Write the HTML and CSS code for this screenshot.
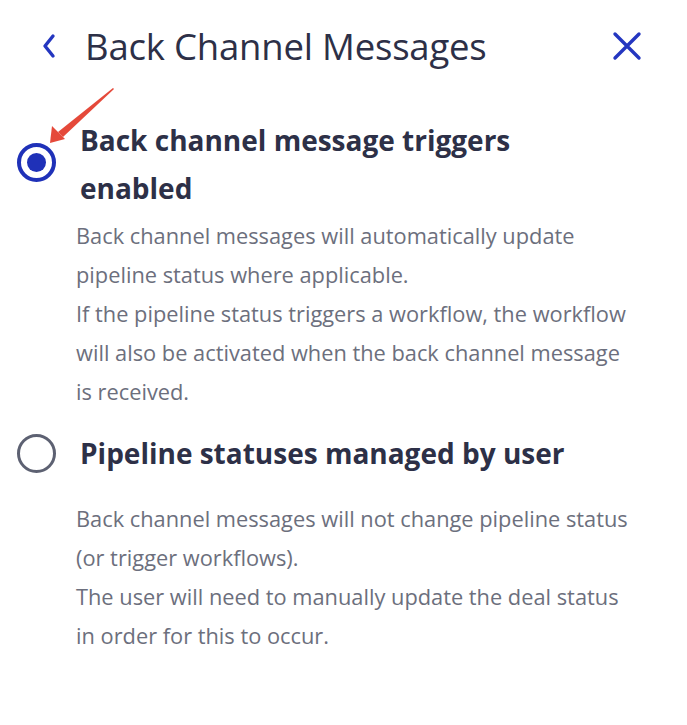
FILE: index.html
```html
<!DOCTYPE html>
<html>
<head>
<meta charset="utf-8">
<link rel="stylesheet" href="styles.css">
</head>
<body>
<div class="panel">
  <header class="header">
    <button class="icon-btn back" aria-label="Back">
      <svg width="14" height="26" viewBox="0 0 14 26"><path d="M11 3 L3 13 L11 23" fill="none" stroke="#2436c0" stroke-width="3.4" stroke-linecap="round" stroke-linejoin="round"/></svg>
    </button>
    <h1 class="title">Back Channel Messages</h1>
    <button class="icon-btn close" aria-label="Close">
      <svg width="30" height="30" viewBox="0 0 30 30"><path d="M3 3 L27 27 M27 3 L3 27" fill="none" stroke="#2436c0" stroke-width="3.4" stroke-linecap="round"/></svg>
    </button>
  </header>

  <div class="options">
    <div class="option">
      <div class="option-head">
        <span class="radio checked"><span class="dot"></span></span>
        <span class="label">Back channel message triggers enabled</span>
        <svg class="arrow" width="80" height="70" viewBox="0 0 80 70"><path d="M72 0 L73 1 L22 49 L17 44 Z" fill="#e5493a"/><path d="M9 55 L11 38 L24 51 Z" fill="#e5493a"/></svg>
      </div>
      <p class="desc">Back channel messages will automatically update pipeline status where applicable.<br>If the pipeline status triggers a workflow, the workflow will also be activated when the back channel message is received.</p>
    </div>
    <div class="option second">
      <div class="option-head">
        <span class="radio"></span>
        <span class="label">Pipeline statuses managed by user</span>
      </div>
      <p class="desc">Back channel messages will not change pipeline status (or trigger workflows).<br>The user will need to manually update the deal status in order for this to occur.</p>
    </div>
  </div>
</div>
</body>
</html>
```

FILE: styles.css
```css
* { box-sizing: border-box; }
html, body { margin: 0; padding: 0; background: #ffffff; }
body { font-family: "Open Sans", "Liberation Sans", sans-serif; color: #2b2f45; }

.panel { width: 687px; }

.header {
  display: flex;
  align-items: center;
  height: 92px;
  padding: 0 45px 0 42px;
}
.icon-btn {
  border: 0;
  background: none;
  padding: 0;
  display: flex;
  align-items: center;
  justify-content: center;
  cursor: pointer;
}
.back { width: 14px; height: 26px; margin-right: 29px; }
.close { width: 30px; height: 30px; margin-left: auto; }
.title {
  margin: 0;
  font-size: 36.5px;
  font-weight: 400;
  color: #2d3047;
  line-height: 44px;
  letter-spacing: -0.2px;
}

.options { padding: 24px 0 0 0; }
.option-head {
  position: relative;
  display: grid;
  grid-template-columns: 80px 500px;
  align-items: center;
}
.radio {
  justify-self: start;
  margin-left: 17px;
  width: 39px;
  height: 39px;
  border-radius: 50%;
  border: 3px solid #5d6172;
  display: flex;
  align-items: center;
  justify-content: center;
}
.radio.checked { border: 4px solid #1f31b8; margin-top: -3px; }
.dot { width: 19px; height: 19px; border-radius: 50%; background: #1f31b8; }
.label {
  font-size: 28px;
  font-weight: 700;
  line-height: 48px;
  color: #2d3047;
}
.arrow { position: absolute; left: 41px; top: -28px; }

.desc {
  margin: 4px 0 0 76px;
  width: 556px;
  font-size: 21.8px;
  line-height: 39px;
  color: #6c6f7d;
}
.second { margin-top: 18px; }
.second .desc { margin-top: 22px; }
```
